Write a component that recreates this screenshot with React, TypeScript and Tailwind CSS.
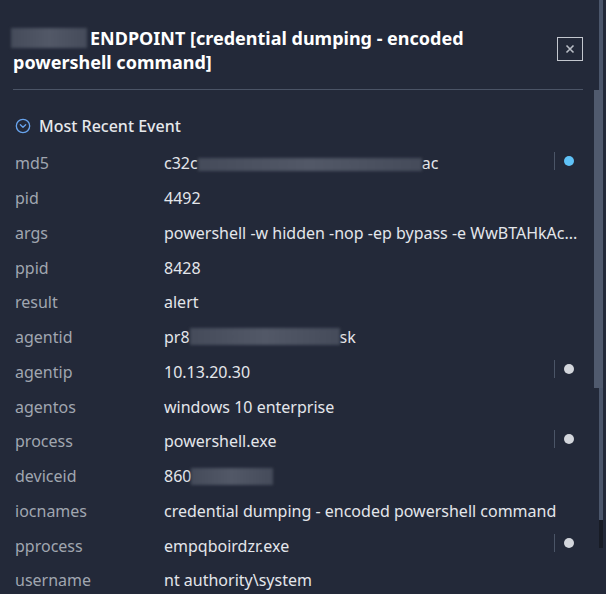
import React from 'react';
import { CircleChevronDown } from 'lucide-react';

type Marker = 'blue' | 'gray' | null;

interface Field {
  label: string;
  value: React.ReactNode;
  marker?: Marker;
}

// Redacted chunk of a value, shown as a smudged bar
const Masked: React.FC<{ className: string }> = ({ className }) => (
  <span
    className={`inline-block align-middle bg-gradient-to-r from-[#454b5a] via-[#525867] to-[#454b5a] blur-[1.5px] ${className}`}
  />
);

const fields: Field[] = [
  {
    label: 'md5',
    value: (
      <>
        c32c
        <Masked className="w-[224px] h-[13px] -mt-[2px]" />
        ac
      </>
    ),
    marker: 'blue',
  },
  { label: 'pid', value: '4492' },
  { label: 'args', value: 'powershell -w hidden -nop -ep bypass -e WwBTAHkAc...' },
  { label: 'ppid', value: '8428' },
  { label: 'result', value: 'alert' },
  {
    label: 'agentid',
    value: (
      <>
        pr8
        <Masked className="w-[150px] h-[17px] -mt-[4px]" />
        sk
      </>
    ),
  },
  { label: 'agentip', value: '10.13.20.30', marker: 'gray' },
  { label: 'agentos', value: 'windows 10 enterprise' },
  { label: 'process', value: 'powershell.exe', marker: 'gray' },
  {
    label: 'deviceid',
    value: (
      <>
        860
        <Masked className="w-[82px] h-[17px] -mt-[2px]" />
      </>
    ),
  },
  { label: 'iocnames', value: 'credential dumping - encoded powershell command' },
  { label: 'pprocess', value: 'empqboirdzr.exe', marker: 'gray' },
  { label: 'username', value: 'nt authority\\system' },
];

const FieldRow: React.FC<{ field: Field }> = ({ field }) => (
  <div className="flex items-center h-[34.75px] text-[16px] whitespace-nowrap">
    <div className="w-[151px] pl-[2px] text-[#a0a6b0]">{field.label}</div>
    <div className="flex-1 text-[#e3e6eb]">{field.value}</div>
    {field.marker && (
      <div className="flex items-center gap-[9px] pr-[9px] -mt-[5px]">
        <span className="w-[1.5px] h-[18px] bg-[#4b5567]" />
        <span
          className={`w-[10px] h-[10px] rounded-full ${
            field.marker === 'blue' ? 'bg-[#5fc2f7]' : 'bg-[#d3d6dc]'
          }`}
        />
      </div>
    )}
  </div>
);

const App: React.FC = () => {
  return (
    <div
      className="relative w-[606px] h-[594px] overflow-hidden bg-[#232939]"
      style={{ fontFamily: '"Noto Sans", "Open Sans", sans-serif' }}
    >
      <div className="pl-[13px] pr-[23px] pt-[26px]">
        {/* Header */}
        <div className="flex items-start justify-between pb-[15px] border-b border-[#4b5466]">
          <h2 className="w-[500px] text-[18px] leading-[24px] font-bold text-white">
            <Masked className="w-[76px] h-[20px] -ml-[2px] mr-[3px] -mt-[4px]" />
            ENDPOINT [credential dumping - encoded powershell command]
          </h2>
          <button className="mt-[11px] w-[26px] h-[24px] flex items-center justify-center border-[1.5px] border-[#c3c7ce] text-[#b9bdc6]">
            <svg width="10" height="10" viewBox="0 0 10 10" fill="none">
              <path d="M1.5 1.5L8.5 8.5M8.5 1.5L1.5 8.5" stroke="currentColor" strokeWidth="1.6" />
            </svg>
          </button>
        </div>

        {/* Event section */}
        <div className="flex items-center gap-[8px] mt-[24px] pl-[2px] h-[24px]">
          <CircleChevronDown className="w-[16px] h-[16px] text-[#68a4ee]" strokeWidth={2} />
          <span className="text-[16px] font-medium text-[#e6e8ec]">Most Recent Event</span>
        </div>

        <div className="mt-[8px]">
          {fields.map((f) => (
            <FieldRow key={f.label} field={f} />
          ))}
        </div>
      </div>

      {/* Scrollbars */}
      <div className="absolute right-[3px] top-0 w-[4px] h-[520px] bg-[#4b566b]" />
      <div className="absolute right-[3px] top-[520px] w-[4px] h-[28px] bg-[#181c26]" />
      <div className="absolute right-[3px] top-[90px] w-[9px] h-[298px] bg-[#505a6e]" />
    </div>
  );
};

export default App;
